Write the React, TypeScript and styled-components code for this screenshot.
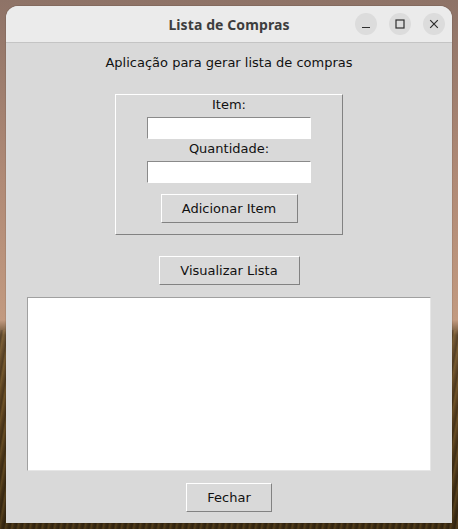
import styled, { createGlobalStyle } from 'styled-components';

const Global = createGlobalStyle`
  html, body {
    margin: 0;
    padding: 0;
    width: 458px;
    height: 529px;
    overflow: hidden;
  }
  body {
    background:
      repeating-linear-gradient(100deg, rgba(0,0,0,0) 0px, rgba(0,0,0,0.18) 2px, rgba(255,200,90,0.12) 4px, rgba(0,0,0,0) 6px),
      linear-gradient(to bottom, #8e7367 0px, #b08a76 180px, #c29a80 320px, #6b5233 335px, #5a4120 400px, #3a2a12 529px);
    background-size: 100% 529px, 100% 100%;
    background-position: 0 330px, 0 0;
    background-repeat: no-repeat;
  }
`;

const Desktop = styled.div`
  padding: 6px;
  box-sizing: border-box;
  width: 458px;
  height: 529px;
`;

const Window = styled.div`
  display: flex;
  flex-direction: column;
  width: 446px;
  height: 517px;
  border-radius: 12px 12px 0 0;
  overflow: hidden;
  background: #d9d9d9;
  box-shadow: 0 0 0 1px rgba(0, 0, 0, 0.08);
`;

const TitleBar = styled.header`
  position: relative;
  flex: 0 0 36px;
  display: flex;
  align-items: center;
  justify-content: center;
  background: #ebebeb;
  border-bottom: 1px solid #c4c4c4;
`;

const Title = styled.h1`
  margin: 0;
  font-family: 'Noto Sans', 'DejaVu Sans', sans-serif;
  font-weight: 700;
  font-size: 14px;
  color: #3d3d3d;
  letter-spacing: 0.1px;
`;

const Controls = styled.div`
  position: absolute;
  right: 7px;
  top: 7px;
  display: flex;
  gap: 12px;
`;

const CtlButton = styled.div`
  width: 22px;
  height: 22px;
  border-radius: 50%;
  background: #dcdcdc;
  display: flex;
  align-items: center;
  justify-content: center;
  color: #2e2e2e;
`;

const Content = styled.main`
  flex: 1;
  display: flex;
  flex-direction: column;
  align-items: center;
  padding: 11px 0 0;
  font-family: 'DejaVu Sans', sans-serif;
  font-size: 13px;
  color: #111;
`;

const Heading = styled.div`
  line-height: 17px;
`;

const Group = styled.section`
  margin-top: 23px;
  width: 228px;
  box-sizing: border-box;
  display: flex;
  flex-direction: column;
  align-items: center;
  padding: 1px 0 11px;
  border: 1px solid;
  border-color: #ffffff #828282 #828282 #ffffff;
`;

const FieldLabel = styled.label<{ $gap?: number }>`
  display: block;
  line-height: 17px;
  margin-top: ${p => p.$gap ?? 0}px;
`;

const Entry = styled.input`
  margin-top: 4px;
  width: 164px;
  height: 22px;
  box-sizing: border-box;
  padding: 0 2px;
  background: #ffffff;
  border: 1px solid;
  border-color: #8a8a8a #ffffff #ffffff #8a8a8a;
  outline: none;
  font: inherit;
`;

const Button = styled.button<{ $w: number; $mt: number }>`
  margin-top: ${p => p.$mt}px;
  width: ${p => p.$w}px;
  height: 29px;
  box-sizing: border-box;
  padding: 0;
  background: #d9d9d9;
  border: 1px solid;
  border-color: #ffffff #828282 #828282 #ffffff;
  font-family: 'DejaVu Sans', sans-serif;
  font-size: 13px;
  color: #111;
`;

const ListBox = styled.div`
  margin-top: 12px;
  width: 404px;
  height: 174px;
  box-sizing: border-box;
  background: #ffffff;
  border: 1px solid;
  border-color: #a0a0a0 #e6e6e6 #e6e6e6 #a0a0a0;
`;

export default function App() {
  return (
    <>
      <Global />
      <Desktop>
        <Window>
          <TitleBar>
            <Title>Lista de Compras</Title>
            <Controls>
              <CtlButton>
                <svg width="10" height="10" viewBox="0 0 10 10">
                  <path d="M1 8.5h8" stroke="currentColor" strokeWidth="1.2" />
                </svg>
              </CtlButton>
              <CtlButton>
                <svg width="10" height="10" viewBox="0 0 10 10">
                  <rect x="1" y="1" width="8" height="8" fill="none" stroke="currentColor" strokeWidth="1.2" />
                </svg>
              </CtlButton>
              <CtlButton>
                <svg width="10" height="10" viewBox="0 0 10 10">
                  <path d="M1.2 1.2l7.6 7.6M8.8 1.2l-7.6 7.6" stroke="currentColor" strokeWidth="1.2" />
                </svg>
              </CtlButton>
            </Controls>
          </TitleBar>
          <Content>
            <Heading>Aplicação para gerar lista de compras</Heading>
            <Group>
              <FieldLabel>Item:</FieldLabel>
              <Entry />
              <FieldLabel $gap={1}>Quantidade:</FieldLabel>
              <Entry />
              <Button $w={137} $mt={11}>Adicionar Item</Button>
            </Group>
            <Button $w={141} $mt={21}>Visualizar Lista</Button>
            <ListBox />
            <Button $w={86} $mt={12}>Fechar</Button>
          </Content>
        </Window>
      </Desktop>
    </>
  );
}
